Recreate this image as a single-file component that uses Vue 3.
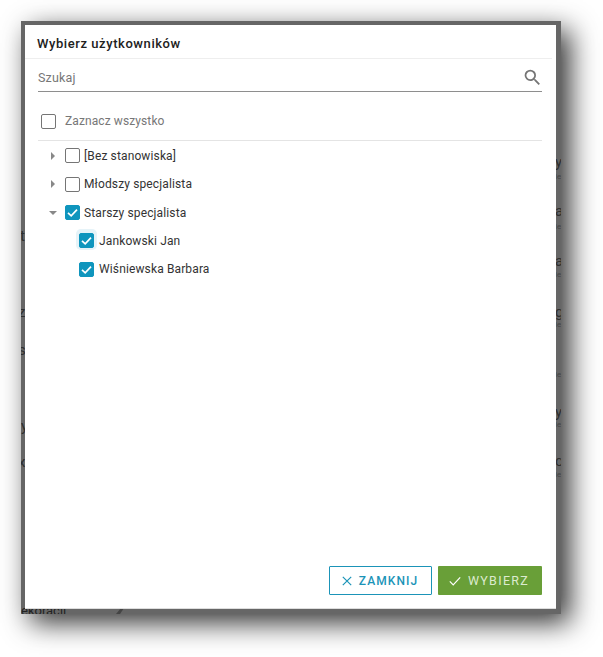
<script setup>
const rows = [
  { label: '[Bez stanowiska]', arrow: 'right', checked: false },
  { label: 'Młodszy specjalista', arrow: 'right', checked: false },
  { label: 'Starszy specjalista', arrow: 'down', checked: true },
  { label: 'Jankowski Jan', checked: true, child: true, focus: true },
  { label: 'Wiśniewska Barbara', checked: true, child: true }
]
const slivers = [
  { t: 'y', x: 555, y: 154, big: true }, { t: 'ie', x: 555, y: 172 },
  { t: 'a', x: 555, y: 203, big: true }, { t: 'ie', x: 555, y: 222 },
  { t: 'a', x: 555, y: 253, big: true }, { t: 'ie', x: 555, y: 270 },
  { t: 'g', x: 555, y: 304, big: true }, { t: 'ie', x: 555, y: 320 },
  { t: 'ie', x: 555, y: 370 },
  { t: 'y', x: 555, y: 404, big: true }, { t: 'ie', x: 555, y: 420 },
  { t: 'c', x: 555, y: 453, big: true }, { t: 'ie', x: 555, y: 470 },
  { t: 't', x: 20, y: 228, big: true }, { t: 'z', x: 18, y: 304, big: true },
  { t: 's', x: 18, y: 342, big: true }, { t: 'y', x: 21, y: 418, big: true },
  { t: 'x', x: 18, y: 454, big: true }
]
</script>

<template>
  <div class="page">
    <div class="frame">
      <div class="behind">
        <span
          v-for="(s, i) in slivers"
          :key="i"
          class="sliver"
          :class="{ big: s.big }"
          :style="{ left: s.x - 21 + 'px', top: s.y - 21 + 'px' }"
        >{{ s.t }}</span>
        <div class="stub">ekoracji</div>
        <svg class="pencil" width="10" height="6" viewBox="0 0 10 6"><path d="M1 6 L6 0 H9 L5 6 Z" fill="#444" /></svg>
      </div>
      <div class="dialog">
        <header class="title">Wybierz użytkowników</header>
        <div class="body">
          <div class="search">
            <span class="placeholder">Szukaj</span>
            <svg width="21" height="21" viewBox="0 0 24 24" class="lens">
              <path fill="#757575" d="M15.5 14h-.79l-.28-.27A6.47 6.47 0 0 0 16 9.5 6.5 6.5 0 1 0 9.5 16c1.61 0 3.09-.59 4.23-1.57l.27.28v.79l5 4.99L20.49 19l-4.99-5zm-6 0C7.01 14 5 11.99 5 9.5S7.01 5 9.5 5 14 7.01 14 9.5 11.99 14 9.5 14z" />
            </svg>
          </div>
          <div class="all">
            <span class="box"></span>
            <span>Zaznacz wszystko</span>
          </div>
          <ul class="tree">
            <li v-for="r in rows" :key="r.label" class="row" :class="{ child: r.child }">
              <span v-if="!r.child" class="arrow" :class="r.arrow"></span>
              <span class="box" :class="{ on: r.checked, focus: r.focus }">
                <svg v-if="r.checked" width="15" height="15" viewBox="0 0 15 15"><path d="M3 7.8 6.2 10.8 12 4.6" fill="none" stroke="#fff" stroke-width="1.7" /></svg>
              </span>
              <span class="label">{{ r.label }}</span>
            </li>
          </ul>
        </div>
        <footer class="actions">
          <button class="btn close">
            <svg width="10" height="10" viewBox="0 0 10 10"><path d="M.8.8 9.2 9.2M9.2.8.8 9.2" stroke="#1b94b8" stroke-width="1.2" fill="none" /></svg>
            ZAMKNIJ
          </button>
          <button class="btn pick">
            <svg width="12" height="10" viewBox="0 0 12 10"><path d="M.8 5.4 4.2 8.8 11.2 1.4" stroke="#fff" stroke-width="1.2" fill="none" /></svg>
            WYBIERZ
          </button>
        </footer>
      </div>
    </div>
  </div>
</template>

<style>
html, body { margin: 0; background: #fff; }
</style>

<style scoped>
.page {
  width: 603px;
  height: 657px;
  padding: 21px 0 0 21px;
  box-sizing: border-box;
  overflow: hidden;
  font-family: Roboto, "Liberation Sans", sans-serif;
}
.frame {
  position: relative;
  width: 540px;
  height: 593px;
  box-sizing: border-box;
  padding: 4px 5px 5px 4px;
  background: #666;
  box-shadow: 9px 9px 26px rgba(0, 0, 0, .8);
}
.behind { position: absolute; inset: 0; overflow: hidden; }
.sliver {
  position: absolute;
  font-size: 8px;
  line-height: 10px;
  color: #444;
}
.sliver.big { font-size: 15px; line-height: 16px; color: #2e2e2e; }
.stub {
  position: absolute;
  left: 0;
  top: 584px;
  font-size: 13px;
  line-height: 12px;
  color: #222;
}
.pencil { position: absolute; left: 94px; top: 587px; }
.dialog {
  position: relative;
  display: flex;
  flex-direction: column;
  height: 100%;
  background: #fff;
  border-bottom: 1px solid #ddd;
  box-sizing: border-box;
}
.title {
  height: 33px;
  line-height: 37px;
  padding-left: 12px;
  font-size: 13px;
  font-weight: 500;
  color: #212121;
  border-bottom: 1px solid #eee;
  margin-right: 4px;
  letter-spacing: .57px;
}
.body { flex: 1; padding: 0 14px 0 13px; }
.search {
  display: flex;
  justify-content: space-between;
  align-items: center;
  height: 32px;
  border-bottom: 1px solid #8e8e8e;
  font-size: 12.5px;
  color: #777;
  letter-spacing: .15px;
}
.placeholder { position: relative; top: 2px; }
.lens { margin-right: -1px; position: relative; top: 2px; }
.all {
  display: flex;
  align-items: center;
  gap: 9px;
  height: 49px;
  padding: 10px 0 0 3px;
  box-sizing: border-box;
  font-size: 12px;
  color: #777;
  border-bottom: 1px solid #e4e4e4;
  letter-spacing: .1px;
}
.tree { list-style: none; margin: 0; padding: 0; }
.row {
  display: flex;
  align-items: center;
  height: 28.4px;
  padding-left: 12px;
  font-size: 12px;
  color: #333;
  letter-spacing: .13px;
}
.row:first-child { margin-top: .6px; }
.row.child { padding-left: 41px; }
.row.child .label { margin-left: 5px; }
.arrow { width: 15px; flex: none; display: block; height: 0; position: relative; }
.arrow::before { content: ''; position: absolute; }
.arrow.right::before {
  left: 1px; top: -4px;
  border-left: 4px solid #888;
  border-top: 4px solid transparent;
  border-bottom: 4px solid transparent;
}
.arrow.down::before {
  left: -1px; top: -2px;
  border-top: 4px solid #888;
  border-left: 4px solid transparent;
  border-right: 4px solid transparent;
}
.box {
  flex: none;
  display: flex;
  align-items: center;
  justify-content: center;
  width: 15px;
  height: 15px;
  border: 1.5px solid #757575;
  border-radius: 2px;
  box-sizing: border-box;
  position: relative;
}
.box.on { background: #0f95bd; border-color: #0f95bd; }
.box.focus { box-shadow: 0 -1px 0 3px #e6f3f8; }
.box svg { flex: none; }
.label { margin-left: 4px; }
.actions {
  display: flex;
  justify-content: flex-end;
  gap: 6px;
  padding: 0 14px 13px 0;
}
.btn {
  height: 29px;
  box-sizing: border-box;
  display: flex;
  align-items: center;
  justify-content: center;
  gap: 7px;
  border-radius: 1px;
  font-family: inherit;
  font-size: 12px;
  padding: 0;
}
.close {
  width: 103px;
  background: #fff;
  border: 1px solid #1b94b8;
  color: #1b94b8;
  font-weight: 500;
  letter-spacing: 1.05px;
  padding-right: 1px;
}
.pick {
  width: 104px;
  background: #699f38;
  border: 0;
  color: #dcebcf;
  font-size: 12.5px;
  letter-spacing: 1.3px;
  padding-right: 2px;
}
</style>
